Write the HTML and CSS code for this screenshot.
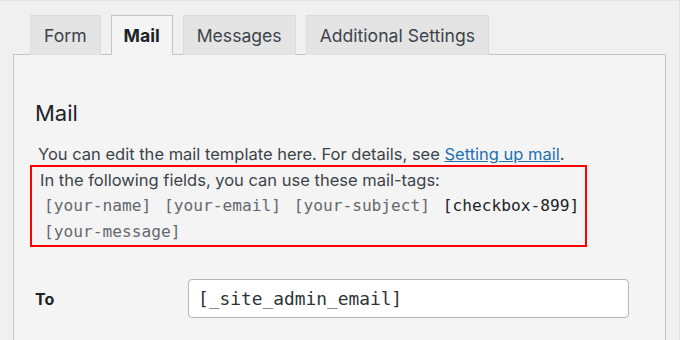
FILE: index.html
```html
<!DOCTYPE html>
<html lang="en">
<head>
<meta charset="utf-8">
<title>Contact Form – Mail</title>
<link rel="stylesheet" href="styles.css">
</head>
<body>
<div class="page">
  <nav class="tabs">
    <span class="tab">Form</span>
    <span class="tab tab-active">Mail</span>
    <span class="tab">Messages</span>
    <span class="tab">Additional Settings</span>
  </nav>
  <section class="panel">
    <h2 class="panel-title">Mail</h2>
    <p class="intro">You can edit the mail template here. For details, see <a class="link" href="#">Setting up mail</a>.</p>
    <div class="highlight">
      <p class="intro">In the following fields, you can use these mail-tags:</p>
      <p class="tags"><span class="tag">[your-name]</span> <span class="tag">[your-email]</span> <span class="tag">[your-subject]</span> <span class="tag tag-used">[checkbox-899]</span><br><span class="tag">[your-message]</span></p>
    </div>
    <div class="field">
      <label class="field-label" for="mail-to">To</label>
      <input class="field-input" id="mail-to" type="text" value="[_site_admin_email]">
    </div>
  </section>
</div>
</body>
</html>
```
FILE: styles.css
```css
* { box-sizing: border-box; }
html, body { margin: 0; padding: 0; }
body {
  background: #f0f0f0;
  font-family: Inter, "Noto Sans", sans-serif;
  color: #3c434a;
  width: 680px;
  height: 340px;
  overflow: hidden;
}
.page {
  padding: 15px 13px 0 13px;
  border-top: 1px solid #e2e2e2;
  border-right: 1px solid #e2e2e2;
  height: 340px;
}
.tabs {
  display: flex;
  gap: 10px;
  padding-left: 17px;
  margin-top: -1px;
}
.tab {
  display: flex;
  align-items: center;
  height: 40px;
  padding: 0 13px;
  border: 1px solid #dcdcde;
  border-bottom: none;
  background: #e4e4e4;
  font-size: 17.6px;
  color: #3c434a;
  margin-bottom: -1px;
  position: relative;
}
.tab-active {
  background: #f4f4f4;
  border-color: #c3c4c7;
  font-weight: 700;
  color: #1d2327;
  padding: 0 12px;
  z-index: 1;
}
.panel {
  background: #f4f4f4;
  border: 1px solid #c3c4c7;
  border-bottom: none;
  height: 300px;
  padding: 43px 21px 0 21px;
}
.panel-title {
  margin: 0;
  font-size: 22px;
  font-weight: 400;
  color: #1d2327;
  line-height: 30px;
}
.intro {
  margin: 0;
  padding-left: 3px;
  font-size: 16.5px;
  line-height: 26px;
}
.panel-title + .intro { margin-top: 13px; }
.link { color: #2271b1; text-decoration: underline; }
.highlight {
  margin: -2px 0 0 -5px;
  width: 557px;
  border: 2px solid #ff0000;
  padding-left: 5px;
}
.tags {
  margin: 0;
  padding-left: 7px;
  font-family: "DejaVu Sans Mono", monospace;
  font-size: 16.2px;
  line-height: 26px;
  color: #646970;
}
.tag { margin-right: 3px; }
.tag-used { color: #1d2327; }
.field {
  display: grid;
  grid-template-columns: 153px 441px;
  align-items: center;
  margin-top: 32px;
}
.field-label {
  font-weight: 700;
  font-size: 16px;
  color: #1d2327;
}
.field-input {
  height: 39px;
  border: 1px solid #b4b6ba;
  border-radius: 4px;
  background: #fff;
  padding: 0 9px;
  font-family: "DejaVu Sans Mono", monospace;
  font-size: 17.85px;
  color: #2c3338;
  outline: none;
}
```
